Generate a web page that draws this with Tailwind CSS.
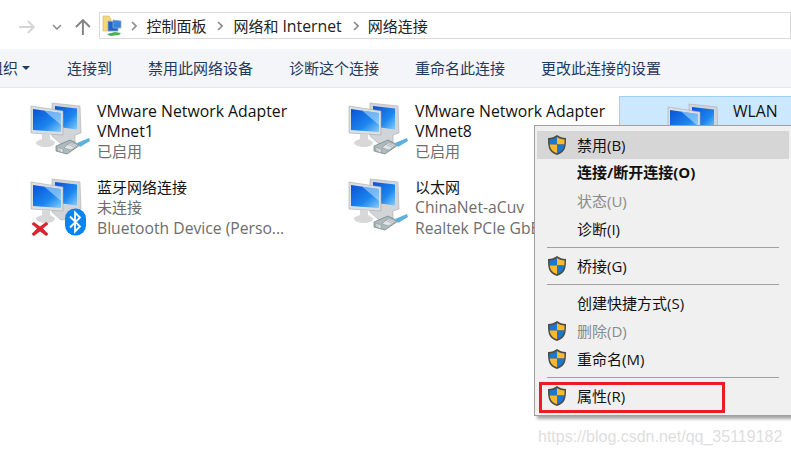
<!DOCTYPE html>
<html><head><meta charset="utf-8"><script src="https://cdn.jsdelivr.net/npm/@tailwindcss/browser@4"></script></head>
<body class="relative w-[791px] h-[456px] overflow-hidden bg-white font-['Open_Sans','Noto_Sans_CJK_SC',sans-serif] text-[15px] leading-[20px] text-[#111]">
<svg class="absolute w-0 h-0"><defs>
<linearGradient id="scr" x1="0" y1="0" x2="1" y2="1"><stop offset="0" stop-color="#0a50d8"/><stop offset=".6" stop-color="#1c86ee"/><stop offset="1" stop-color="#86ccf8"/></linearGradient>
<symbol id="pc" viewBox="0 0 60 60">
<path d="M22 3l28 3 1 27-6 2v7l-14 2-9-8z" fill="#d2d5d8" stroke="#a9adb0" stroke-width=".6"/>
<path d="M25 6l22 2.500v21l-22-3z" fill="url(#scr)"/>
<path d="M1 6l32 5v24l-32-2z" fill="#dcdfe1" stroke="#a5a9ad" stroke-width=".6"/>
<path d="M3 9l28 4v19l-28-2z" fill="url(#scr)"/>
<path d="M14 10.500l17 2.500v12z" fill="#bfe4ff" opacity=".55"/>
<path d="M12 34h8v5l5 3c0 3-4 5-9 5s-10-2-10-4c0-2 3-3 6-4z" fill="#d8d8d8"/>
</symbol>
<symbol id="plug" viewBox="0 0 36 18">
<path d="M1 9l14-6 10 5-13 9-11-3z" fill="#aebabd" stroke="#6f7c80" stroke-width=".7"/>
<path d="M3 10l5 2v4l-5-2zM15 5l8 3-7 5-7-2z" fill="#dfe5e6" stroke="#7f8b8e" stroke-width=".5"/>
<path d="M5 11v4M12 7l7 3M14 6l7 3" stroke="#7f8b8e" stroke-width=".5"/>
<path d="M22 6l12-5 1 3-10 6z" fill="#5cb1dc"/>
</symbol>
<symbol id="shield" viewBox="0 0 20 22">
<path d="M10 1c3 2 5 3 9 3 0 8 0 14-9 17C1 18 1 12 1 4c4 0 6-1 9-3z" fill="#4d4d45"/>
<path d="M10 3c2 1.500 4 2.500 7.500 2.500 0 2 0 3.500-.2 5H10z" fill="#fbb92c"/>
<path d="M10 3v7.500H2.700c-.2-1.500-.2-3-.2-5C6 5.500 8 4.500 10 3z" fill="#1a78d0"/>
<path d="M2.700 10.500H10v8.700C5 17.500 3.200 14.500 2.700 10.500z" fill="#fbb92c"/>
<path d="M10 10.500h7.300c-.5 4-2.300 7-7.300 8.700z" fill="#1a78d0"/>
</symbol>
</defs></svg>

<header class="flex h-[49px] items-start">
  <svg class="ml-[19px] mt-[19px] w-[17px] h-[16px]" viewBox="0 0 17 16" fill="none" stroke="#d6d6d6" stroke-width="2"><path d="M0 8h15M9 2l6 6-6 6"/></svg>
  <svg class="ml-[16px] mt-[24px] w-[10px] h-[6px]" viewBox="0 0 10 6" fill="none" stroke="#8c8c8c" stroke-width="1.600"><path d="M1 1l4 4 4-4"/></svg>
  <svg class="ml-[13px] mt-[19px] w-[16px] h-[16px]" viewBox="0 0 16 16" fill="none" stroke="#848484" stroke-width="2"><path d="M8 16V1M1 8l7-7 7 7"/></svg>
  <nav class="ml-[8px] mt-[12px] w-[700px] h-[27px] border border-[#d9d9d9] flex items-center text-[#222]">
    <svg class="ml-[2px] w-[20px] h-[22px]" viewBox="0 0 20 22"><path d="M1 1h6l2 3v12H1z" fill="#f2d77e" stroke="#cdb264" stroke-width=".6"/><path d="M6 6l10 1v9H6z" fill="#1d63d8" stroke="#9aa4ad" stroke-width=".8"/><path d="M11 5l8 1v7h-8z" fill="#2e86e6" stroke="#9aa4ad" stroke-width=".8"/><path d="M5 19l8-2 6 1-2 2-9 1z" fill="#4cb050"/></svg>
    <svg class="ml-[9px] w-[6px] h-[10px]" viewBox="0 0 6 10" fill="none" stroke="#8a8a8a" stroke-width="1.600"><path d="M1 1l4 4-4 4"/></svg>
    <span class="ml-[10px]">控制面板</span>
    <svg class="ml-[10px] w-[6px] h-[10px]" viewBox="0 0 6 10" fill="none" stroke="#8a8a8a" stroke-width="1.600"><path d="M1 1l4 4-4 4"/></svg>
    <span class="ml-[11px]">网络和 <span class="text-[15.800px]">Internet</span></span>
    <svg class="ml-[11px] w-[6px] h-[10px]" viewBox="0 0 6 10" fill="none" stroke="#8a8a8a" stroke-width="1.600"><path d="M1 1l4 4-4 4"/></svg>
    <span class="ml-[9px]">网络连接</span>
  </nav>
</header>

<div class="h-[39px] bg-[#f3f5f8] border-b border-[#e6e6e6] flex items-center text-[#1e3a5f] overflow-hidden">
  <span class="ml-[-12px] w-[30px] shrink-0">组织</span>
  <span class="ml-[4px] w-0 h-0 border-x-[4px] border-x-transparent border-t-[4px] border-t-[#1e3a5f]"></span>
  <span class="ml-[37px]">连接到</span>
  <span class="ml-[36px]">禁用此网络设备</span>
  <span class="ml-[36px]">诊断这个连接</span>
  <span class="ml-[36px]">重命名此连接</span>
  <span class="ml-[36px]">更改此连接的设置</span>
</div>

<main class="ml-[-17px] mt-[8px] grid grid-cols-[318px_318px_318px] auto-rows-[76px] w-[954px]">
  <div class="flex pl-[47px] pt-[4px]">
    <div class="relative w-[67px] h-[60px] shrink-0"><svg class="w-[60px] h-[60px]"><use href="#pc"/></svg><svg class="absolute left-[25px] top-[36px] w-[36px] h-[20px]"><use href="#plug"/></svg></div>
    <div class="mt-[1px]"><p class="text-[15.800px]">VMware Network Adapter</p><p class="text-[15.800px]">VMnet1</p><p class="text-[#6d6d6d]">已启用</p></div>
  </div>
  <div class="flex pl-[47px] pt-[4px]">
    <div class="relative w-[67px] h-[60px] shrink-0"><svg class="w-[60px] h-[60px]"><use href="#pc"/></svg><svg class="absolute left-[25px] top-[36px] w-[36px] h-[20px]"><use href="#plug"/></svg></div>
    <div class="mt-[1px]"><p class="text-[15.800px]">VMware Network Adapter</p><p class="text-[15.800px]">VMnet8</p><p class="text-[#6d6d6d]">已启用</p></div>
  </div>
  <div class="flex pl-[47px] pt-[4px] h-[70px] bg-[#cce8ff] border border-[#99d1ff]">
    <div class="w-[66px] h-[60px] shrink-0"><svg class="w-[60px] h-[60px]"><use href="#pc"/></svg></div>
    <p class="text-[15.800px]">WLAN</p>
  </div>
  <div class="flex pl-[47px] pt-[4px]">
    <div class="relative w-[67px] h-[60px] shrink-0"><svg class="w-[60px] h-[60px]"><use href="#pc"/></svg>
      <svg class="absolute left-[1px] top-[44px] w-[18px] h-[17px]" viewBox="0 0 20 18"><path d="M3 2l7 5 7-5 2 2-6 5 6 6-2 2-7-5-7 5-2-2 6-6-6-5z" fill="#e0202a" stroke="#a81820" stroke-width=".5"/></svg>
      <svg class="absolute left-[35px] top-[32px] w-[21px] h-[28px]" viewBox="0 0 21 27"><rect x="0" y="0" width="21" height="27" rx="10" fill="#0a84f0"/><path d="M5 8l10 10-5 5V4l5 5-10 10" fill="none" stroke="#fff" stroke-width="1.800"/></svg>
    </div>
    <div class="mt-[1px]"><p>蓝牙网络连接</p><p class="text-[#6d6d6d]">未连接</p><p class="mt-[1px] text-[#6d6d6d] text-[15.700px]">Bluetooth Device (Perso...</p></div>
  </div>
  <div class="flex pl-[47px] pt-[4px]">
    <div class="relative w-[67px] h-[60px] shrink-0"><svg class="w-[60px] h-[60px]"><use href="#pc"/></svg><svg class="absolute left-[25px] top-[36px] w-[36px] h-[20px]"><use href="#plug"/></svg></div>
    <div class="mt-[1px] whitespace-nowrap w-[119px] overflow-hidden"><p>以太网</p><p class="text-[#6d6d6d] text-[15.700px]">ChinaNet-aCuv</p><p class="mt-[1px] text-[#6d6d6d] text-[15.700px]">Realtek PCIe GbE Family</p></div>
  </div>
</main>

<div class="absolute left-[534px] top-[125px] w-[258px] h-[291px] bg-[#f0f0f0] border border-[#a0a0a0] shadow-[3px_3px_3px_rgba(0,0,0,0.35)] pt-[5px] pl-[2px] pr-[2px]">
  <div class="flex items-center h-[28px] bg-[#d6d6d6] pl-[10px] pb-[1px]"><svg class="w-[20px] h-[22px]"><use href="#shield"/></svg><span class="ml-[10px]">禁用(B)</span></div>
  <div class="flex items-center h-[28px] pl-[40px] font-bold pb-[2px]">连接/断开连接(O)</div>
  <div class="flex items-center h-[28px] pl-[40px] text-[#8a8a8a]">状态(U)</div>
  <div class="flex items-center h-[28px] pl-[40px]">诊断(I)</div>
  <div class="mt-[4px] mb-[5px] ml-[10px] mr-[10px] h-px bg-[#a0a0a0]"></div>
  <div class="flex items-center h-[28px] pl-[10px] pb-[2px]"><svg class="w-[20px] h-[22px]"><use href="#shield"/></svg><span class="ml-[10px]">桥接(G)</span></div>
  <div class="mt-[3px] mb-[5px] ml-[10px] mr-[10px] h-px bg-[#a0a0a0]"></div>
  <div class="flex items-center h-[28px] pl-[40px] pb-[2px]">创建快捷方式(S)</div>
  <div class="flex items-center h-[28px] pl-[10px] pb-[2px] text-[#8a8a8a]"><svg class="w-[20px] h-[22px]"><use href="#shield"/></svg><span class="ml-[10px]">删除(D)</span></div>
  <div class="flex items-center h-[28px] pl-[10px] pb-[2px]"><svg class="w-[20px] h-[22px]"><use href="#shield"/></svg><span class="ml-[10px]">重命名(M)</span></div>
  <div class="mt-[3px] mb-[5px] ml-[10px] mr-[10px] h-px bg-[#a0a0a0]"></div>
  <div class="flex items-center h-[28px] pl-[10px] pb-[2px]"><svg class="w-[20px] h-[22px]"><use href="#shield"/></svg><span class="ml-[10px]">属性(R)</span></div>
</div>
<div class="absolute left-[539px] top-[382px] w-[186px] h-[31px] border-[3px] border-[#ed1c24]"></div>
<div class="absolute left-[538px] top-[427px] font-['Liberation_Sans',sans-serif] text-[16px] text-[#dedede] whitespace-nowrap">https://blog.csdn.net/qq_35119182</div>
</body></html>
